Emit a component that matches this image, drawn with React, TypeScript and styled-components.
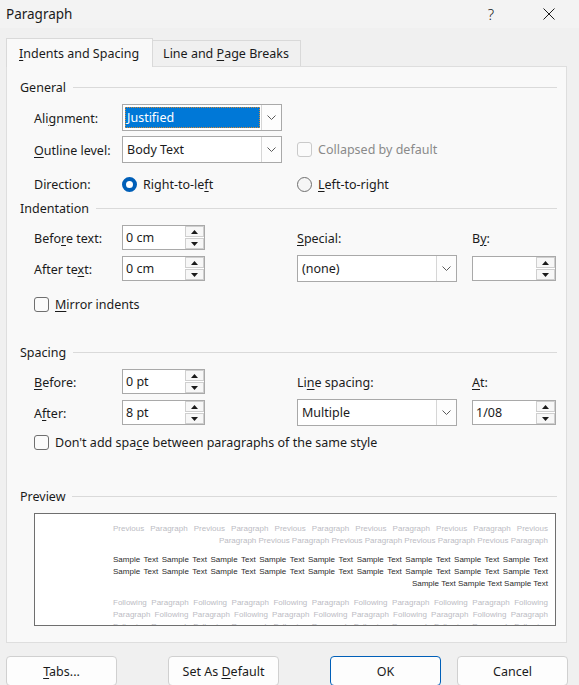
import React from 'react'
import styled, { createGlobalStyle, css } from 'styled-components'

const FONT = '"Noto Sans", "Open Sans", sans-serif'

const GlobalStyle = createGlobalStyle`
  html, body { margin: 0; padding: 0; }
  body {
    background: #f0f0f0;
    font-family: ${FONT};
    font-size: 12.5px;
    color: #1b1b1b;
  }
  * { box-sizing: border-box; }
`

const Window = styled.div`
  width: 579px;
  height: 685px;
  overflow: hidden;
  display: flex;
  flex-direction: column;
  background: #f0f0f0;
`

const TitleBar = styled.div`
  height: 28px;
  flex: none;
  display: flex;
  align-items: center;
  padding: 0 7px 0 6px;
  background: #f3f3f3;
`

const Title = styled.div`
  flex: 1;
  font-size: 13.5px;
`

const TitleButton = styled.div<{ $ml?: number }>`
  width: 46px;
  height: 28px;
  display: flex;
  align-items: center;
  justify-content: center;
  margin-left: ${p => p.$ml ?? 0}px;
  font-size: 15px;
  font-weight: 300;
  color: #1a1a1a;
`

const TabStrip = styled.div`
  height: 38px;
  flex: none;
  display: flex;
  align-items: flex-end;
  padding: 10px 0 0 6px;
  position: relative;
  z-index: 1;
`

const Tab = styled.div<{ $active?: boolean }>`
  height: ${p => (p.$active ? 29 : 26)}px;
  margin-bottom: ${p => (p.$active ? -1 : 0)}px;
  padding: ${p => (p.$active ? '0 13px 0 12px' : '0 11px 0 10px')};
  display: flex;
  align-items: center;
  border: 1px solid #d9d9d9;
  border-bottom: none;
  background: ${p => (p.$active ? '#f9f9f9' : '#f0f0f0')};
  ${p => !p.$active && css`border-left: none;`}
`

const Panel = styled.div`
  flex: none;
  margin: 0 12px 0 6px;
  border: 1px solid #dedede;
  background: #f9f9f9;
  padding: 13px 9px 16px 13px;
`

const SectionHeader = styled.div<{ $mt?: number }>`
  height: 14px;
  display: flex;
  align-items: center;
  margin-top: ${p => p.$mt ?? 0}px;
  &::after {
    content: '';
    flex: 1;
    height: 1px;
    background: #dadada;
    margin-left: 7px;
  }
`

const FormGrid = styled.div<{ $rows: string; $mt: number; $gap?: number }>`
  display: grid;
  grid-template-columns: 88px 175px 175px 84px;
  grid-template-rows: ${p => p.$rows};
  row-gap: ${p => p.$gap ?? 4}px;
  align-items: center;
  margin: ${p => p.$mt}px 0 0 14px;
`

const RowLabel = styled.div`
  grid-column: 1;
  padding-top: 1px;
`

const ColLabel = styled.div`
  padding-top: 1px;
`

const U = styled.span`
  text-decoration: underline;
  text-underline-offset: 2px;
  text-decoration-thickness: 1px;
`

const SelectBox = styled.div<{ $w: number }>`
  width: ${p => p.$w}px;
  height: 27px;
  display: flex;
  border: 1px solid #a9a9a9;
  background: #fff;
`

const SelectValue = styled.div<{ $selected?: boolean }>`
  flex: 1;
  display: flex;
  align-items: center;
  margin: 2px 1px 2px 2px;
  padding-left: 2px;
  ${p =>
    p.$selected &&
    css`
      background: #0078d7;
      color: #fff;
      outline: 1px dotted #d08a3a;
      outline-offset: -1px;
    `}
`

const DropButton = styled.div`
  width: 20px;
  flex: none;
  display: flex;
  align-items: center;
  justify-content: center;
  border-left: 1px solid #d6d6d6;
  background: #fdfdfd;
`

const SpinBox = styled.div<{ $w: number }>`
  width: ${p => p.$w}px;
  height: 25px;
  display: flex;
  border: 1px solid #a9a9a9;
  background: #fff;
`

const SpinValue = styled.div`
  flex: 1;
  display: flex;
  align-items: center;
  padding-left: 3px;
`

const SpinColumn = styled.div`
  width: 19px;
  flex: none;
  display: flex;
  flex-direction: column;
  gap: 1px;
`

const SpinButton = styled.div`
  flex: 1;
  display: flex;
  align-items: center;
  justify-content: center;
  border: 1px solid #cfcfcf;
  background: #f7f7f7;
`

const CheckRow = styled.div<{ $disabled?: boolean; $span?: string }>`
  display: flex;
  align-items: center;
  gap: 6px;
  color: ${p => (p.$disabled ? '#8a8a8a' : 'inherit')};
  grid-column: ${p => p.$span ?? 'auto'};
`

const CheckMark = styled.span<{ $disabled?: boolean }>`
  width: 15px;
  height: 15px;
  flex: none;
  border: 1px solid ${p => (p.$disabled ? '#cacaca' : '#6f6f6f')};
  border-radius: 3px;
  background: #fbfbfb;
`

const RadioMark = styled.span<{ $on?: boolean }>`
  width: 15px;
  height: 15px;
  flex: none;
  border-radius: 50%;
  ${p =>
    p.$on
      ? css`
          border: 4.5px solid #005fb8;
          background: #fff;
        `
      : css`
          border: 1px solid #6f6f6f;
          background: #f6f6f6;
        `}
`

const PreviewBox = styled.div`
  width: 522px;
  height: 113px;
  margin: 10px 0 0 14px;
  border: 1px solid #6f6f6f;
  background: #fff;
  padding: 9px 7px 0 78px;
  overflow: hidden;
  font-family: "Liberation Sans", Arial, sans-serif;
  font-size: 8px;
  line-height: 12px;
`

const PreviewBlock = styled.div<{ $tone: 'light' | 'dark' }>`
  color: ${p => (p.$tone === 'dark' ? '#2b2b2b' : '#bcbcc4')};
  & + & {
    margin-top: 7px;
  }
`

const PreviewLine = styled.div<{ $end?: boolean }>`
  text-align: ${p => (p.$end ? 'right' : 'justify')};
  text-align-last: ${p => (p.$end ? 'right' : 'justify')};
`

const ButtonRow = styled.div`
  display: flex;
  padding-left: 6px;
  margin-top: 13px;
`

const Button = styled.div<{ $primary?: boolean; $ml?: number }>`
  width: 111px;
  height: 30px;
  flex: none;
  margin-left: ${p => p.$ml ?? 0}px;
  display: flex;
  align-items: center;
  justify-content: center;
  border: 1px solid ${p => (p.$primary ? '#005fb8' : '#d0d0d0')};
  border-radius: 4px;
  background: #fdfdfd;
`

const Chevron = () => (
  <svg width="9" height="5" viewBox="0 0 9 5">
    <polyline points="0.5,0.5 4.5,4.5 8.5,0.5" fill="none" stroke="#5a5a5a" strokeWidth="1" />
  </svg>
)

const Triangle = ({ up }: { up?: boolean }) => (
  <svg width="7" height="4" viewBox="0 0 7 4">
    <polygon points={up ? '3.5,0 7,4 0,4' : '0,0 7,0 3.5,4'} fill="#1a1a1a" />
  </svg>
)

const Select = ({ value, w, selected }: { value: string; w: number; selected?: boolean }) => (
  <SelectBox $w={w}>
    <SelectValue $selected={selected}>{value}</SelectValue>
    <DropButton>
      <Chevron />
    </DropButton>
  </SelectBox>
)

const Spin = ({ value, w }: { value: string; w: number }) => (
  <SpinBox $w={w}>
    <SpinValue>{value}</SpinValue>
    <SpinColumn>
      <SpinButton>
        <Triangle up />
      </SpinButton>
      <SpinButton>
        <Triangle />
      </SpinButton>
    </SpinColumn>
  </SpinBox>
)

const repeat = (a: string, b: string, n: number) =>
  Array.from({ length: n }, (_, i) => (i % 2 === 0 ? a : b)).join(' ')

export default function App() {
  return (
    <Window>
      <GlobalStyle />
      <TitleBar>
        <Title>Paragraph</Title>
        <TitleButton>?</TitleButton>
        <TitleButton $ml={12}>
          <svg width="12" height="12" viewBox="0 0 12 12">
            <path d="M0.5 0.5 L11.5 11.5 M11.5 0.5 L0.5 11.5" stroke="#1a1a1a" strokeWidth="1" />
          </svg>
        </TitleButton>
      </TitleBar>

      <TabStrip>
        <Tab $active>
          <span>
            <U>I</U>ndents and Spacing
          </span>
        </Tab>
        <Tab>
          <span>
            Line and <U>P</U>age Breaks
          </span>
        </Tab>
      </TabStrip>

      <Panel>
        <SectionHeader>General</SectionHeader>
        <FormGrid $rows="27px 27px 32px" $mt={10} $gap={5}>
          <RowLabel>
            Ali<U>g</U>nment:
          </RowLabel>
          <Select value="Justified" w={160} selected />
          <RowLabel>
            <U>O</U>utline level:
          </RowLabel>
          <Select value="Body Text" w={160} />
          <CheckRow $disabled $span="3 / span 2">
            <CheckMark $disabled />
            Collapsed by default
          </CheckRow>
          <RowLabel>Direction:</RowLabel>
          <CheckRow>
            <RadioMark $on />
            <span>
              Right-to-le<U>f</U>t
            </span>
          </CheckRow>
          <CheckRow>
            <RadioMark />
            <span>
              <U>L</U>eft-to-right
            </span>
          </CheckRow>
        </FormGrid>

        <SectionHeader $mt={1}>Indentation</SectionHeader>
        <FormGrid $rows="27px 27px 37px" $mt={9}>
          <RowLabel>
            Befo<U>r</U>e text:
          </RowLabel>
          <Spin value="0 cm" w={83} />
          <ColLabel>
            <U>S</U>pecial:
          </ColLabel>
          <ColLabel>
            B<U>y</U>:
          </ColLabel>
          <RowLabel>
            After te<U>x</U>t:
          </RowLabel>
          <Spin value="0 cm" w={83} />
          <Select value="(none)" w={160} />
          <Spin value="" w={84} />
          <CheckRow $span="1 / -1">
            <CheckMark />
            <span>
              <U>M</U>irror indents
            </span>
          </CheckRow>
        </FormGrid>

        <SectionHeader $mt={22}>Spacing</SectionHeader>
        <FormGrid $rows="27px 27px 24px" $mt={9}>
          <RowLabel>
            <U>B</U>efore:
          </RowLabel>
          <Spin value="0 pt" w={83} />
          <ColLabel>
            Li<U>n</U>e spacing:
          </ColLabel>
          <ColLabel>
            <U>A</U>t:
          </ColLabel>
          <RowLabel>
            A<U>f</U>ter:
          </RowLabel>
          <Spin value="8 pt" w={83} />
          <Select value="Multiple" w={160} />
          <Spin value="1/08" w={84} />
          <CheckRow $span="1 / -1">
            <CheckMark />
            <span>
              Don't add spa<U>c</U>e between paragraphs of the same style
            </span>
          </CheckRow>
        </FormGrid>

        <SectionHeader $mt={35}>Preview</SectionHeader>
        <PreviewBox>
          <PreviewBlock $tone="light">
            <PreviewLine>{repeat('Previous', 'Paragraph', 11)}</PreviewLine>
            <PreviewLine $end>{repeat('Paragraph', 'Previous', 9)}</PreviewLine>
          </PreviewBlock>
          <PreviewBlock $tone="dark">
            <PreviewLine>{repeat('Sample', 'Text', 18)}</PreviewLine>
            <PreviewLine>{repeat('Sample', 'Text', 18)}</PreviewLine>
            <PreviewLine $end>{repeat('Sample', 'Text', 6)}</PreviewLine>
          </PreviewBlock>
          <PreviewBlock $tone="light">
            <PreviewLine>{repeat('Following', 'Paragraph', 11)}</PreviewLine>
            <PreviewLine>{repeat('Paragraph', 'Following', 11)}</PreviewLine>
            <PreviewLine>{repeat('Following', 'Paragraph', 11)}</PreviewLine>
          </PreviewBlock>
        </PreviewBox>
      </Panel>

      <ButtonRow>
        <Button>
          <span>
            <U>T</U>abs...
          </span>
        </Button>
        <Button $ml={51}>
          <span>
            Set As <U>D</U>efault
          </span>
        </Button>
        <Button $ml={51} $primary>
          OK
        </Button>
        <Button $ml={16}>Cancel</Button>
      </ButtonRow>
    </Window>
  )
}
